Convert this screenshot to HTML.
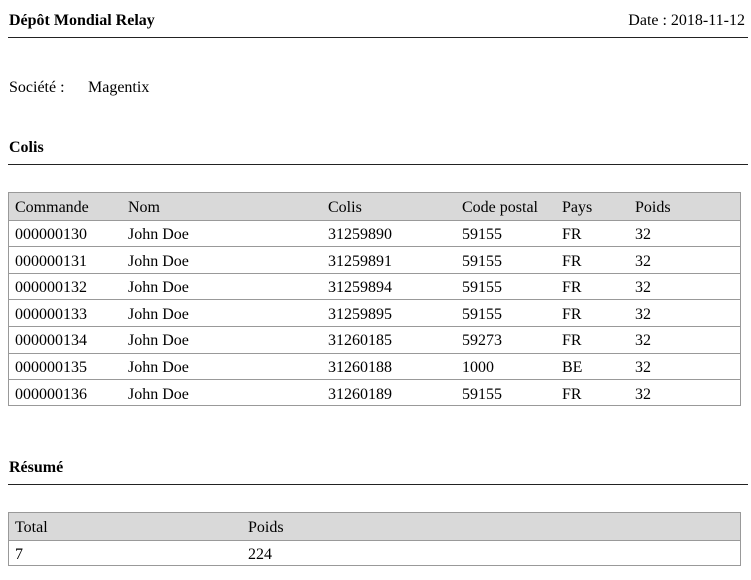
<!DOCTYPE html>
<html><head><meta charset="utf-8"><style>
body{margin:0;width:751px;height:580px;background:#fff;font-family:"Liberation Serif",serif;font-size:16px;color:#000;position:relative;overflow:hidden}
.a{position:absolute;white-space:nowrap;line-height:18px}
.b{font-weight:bold}
.hr{position:absolute;left:8px;width:740px;height:0;border-top:1.5px solid #222}
.tbl{position:absolute;left:8px;width:733px;border:1px solid #999;box-sizing:border-box}
.row{position:relative;height:26.6px;border-top:1px solid #999;box-sizing:border-box}
.row:first-child{border-top:none;background:#d9d9d9}
.row span{position:absolute;top:5.5px;line-height:18px}
</style></head><body>
<div class="a b" style="left:9px;top:12px">Dépôt Mondial Relay</div>
<div class="a" style="right:6px;top:12px">Date : 2018-11-12</div>
<div class="hr" style="top:37px"></div>
<div class="a" style="left:9px;top:79px">Société :</div>
<div class="a" style="left:88px;top:79px">Magentix</div>
<div class="a b" style="left:9px;top:139px">Colis</div>
<div class="hr" style="top:164px"></div>
<div class="tbl" style="top:192px;height:214px">
<div class="row"><span style="left:6px">Commande</span><span style="left:119px">Nom</span><span style="left:319px">Colis</span><span style="left:453px">Code postal</span><span style="left:553px">Pays</span><span style="left:626px">Poids</span></div>
<div class="row"><span style="left:6px">000000130</span><span style="left:119px">John Doe</span><span style="left:319px">31259890</span><span style="left:453px">59155</span><span style="left:553px">FR</span><span style="left:626px">32</span></div>
<div class="row"><span style="left:6px">000000131</span><span style="left:119px">John Doe</span><span style="left:319px">31259891</span><span style="left:453px">59155</span><span style="left:553px">FR</span><span style="left:626px">32</span></div>
<div class="row"><span style="left:6px">000000132</span><span style="left:119px">John Doe</span><span style="left:319px">31259894</span><span style="left:453px">59155</span><span style="left:553px">FR</span><span style="left:626px">32</span></div>
<div class="row"><span style="left:6px">000000133</span><span style="left:119px">John Doe</span><span style="left:319px">31259895</span><span style="left:453px">59155</span><span style="left:553px">FR</span><span style="left:626px">32</span></div>
<div class="row"><span style="left:6px">000000134</span><span style="left:119px">John Doe</span><span style="left:319px">31260185</span><span style="left:453px">59273</span><span style="left:553px">FR</span><span style="left:626px">32</span></div>
<div class="row"><span style="left:6px">000000135</span><span style="left:119px">John Doe</span><span style="left:319px">31260188</span><span style="left:453px">1000</span><span style="left:553px">BE</span><span style="left:626px">32</span></div>
<div class="row"><span style="left:6px">000000136</span><span style="left:119px">John Doe</span><span style="left:319px">31260189</span><span style="left:453px">59155</span><span style="left:553px">FR</span><span style="left:626px">32</span></div>
</div>
<div class="a b" style="left:9px;top:459px">Résumé</div>
<div class="hr" style="top:484px"></div>
<div class="tbl" style="top:512px;height:54px">
<div class="row"><span style="left:6px">Total</span><span style="left:239px">Poids</span></div>
<div class="row"><span style="left:6px">7</span><span style="left:239px">224</span></div>
</div>
</body></html>
